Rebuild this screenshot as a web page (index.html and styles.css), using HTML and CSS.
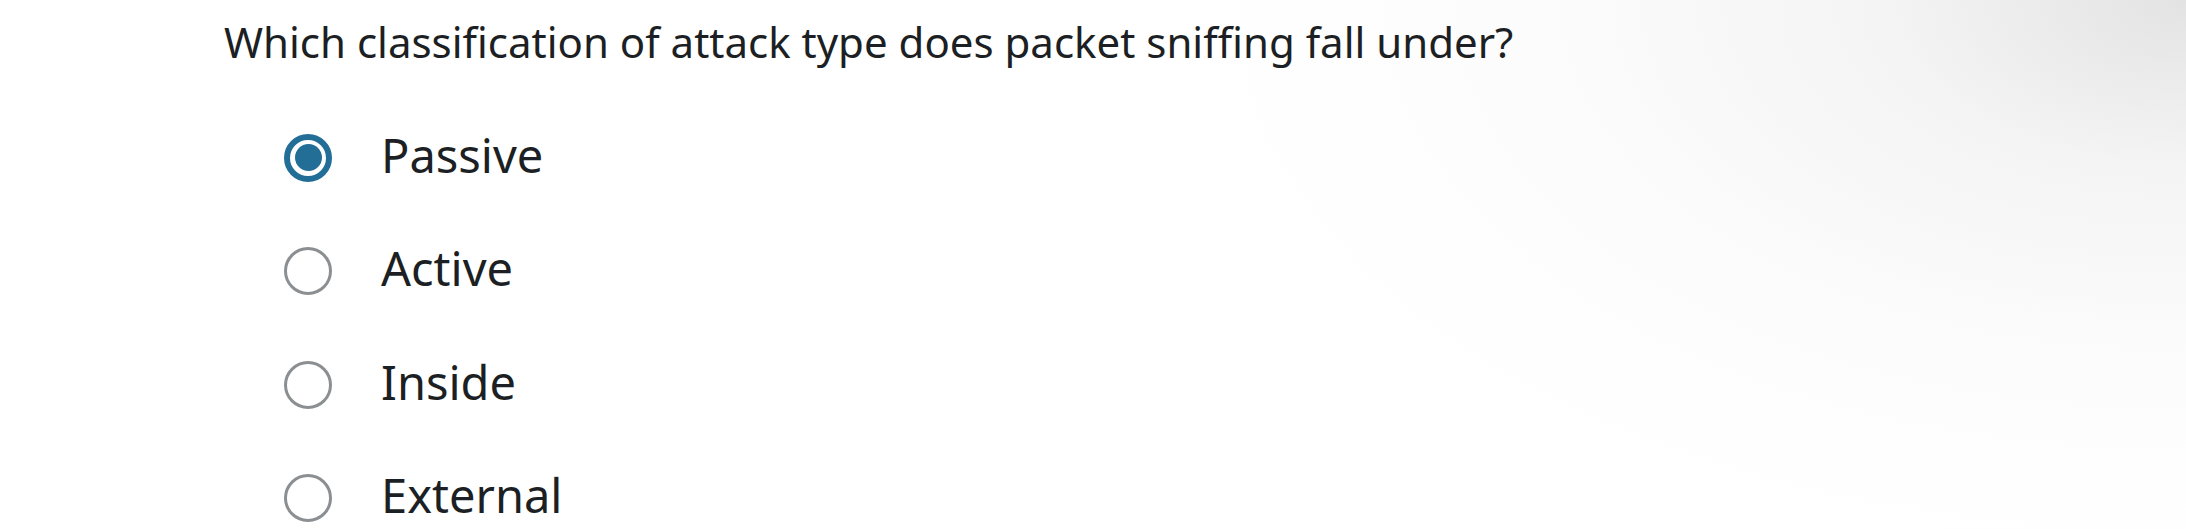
FILE: index.html
```html
<!DOCTYPE html>
<html lang="en">
<head>
<meta charset="utf-8">
<title>Question</title>
<link rel="stylesheet" href="styles.css">
</head>
<body>
<main class="page">
  <div class="question">Which classification of attack type does packet sniffing fall under?</div>
  <ul class="options">
    <li class="option">
      <span class="radio radio-checked"><span class="dot"></span></span>
      <span class="label">Passive</span>
    </li>
    <li class="option">
      <span class="radio"></span>
      <span class="label">Active</span>
    </li>
    <li class="option">
      <span class="radio"></span>
      <span class="label">Inside</span>
    </li>
    <li class="option">
      <span class="radio"></span>
      <span class="label">External</span>
    </li>
  </ul>
</main>
</body>
</html>
```
FILE: styles.css
```css
html, body {
  margin: 0;
  padding: 0;
  height: 100%;
}
body {
  font-family: "Noto Sans", "Open Sans", sans-serif;
  color: #1c1f23;
  background: #ffffff;
  overflow: hidden;
}
.page {
  height: 529px;
  box-sizing: border-box;
  padding: 13px 0 0 224px;
  background:
    radial-gradient(ellipse 1000px 560px at 100% 0%, #e3e3e3 0%, #f4f4f4 30%, #fcfcfc 65%, rgba(255,255,255,0) 100%);
}
.question {
  font-size: 42px;
  line-height: 1.362;
}
.options {
  list-style: none;
  margin: 0;
  padding: 0 0 0 60px;
}
.option {
  display: flex;
  align-items: center;
  height: 113.5px;
}
.options .option:first-child {
  margin-top: 31px;
}
.radio {
  width: 48px;
  height: 48px;
  box-sizing: border-box;
  border-radius: 50%;
  border: 3px solid #8c8f92;
  display: flex;
  align-items: center;
  justify-content: center;
  flex: none;
}
.radio-checked {
  border: 6px solid #236e97;
}
.dot {
  width: 27px;
  height: 27px;
  border-radius: 50%;
  background: #236e97;
}
.label {
  font-size: 47px;
  line-height: 1.362;
  margin-left: 49px;
  padding-bottom: 6px;
}
```
